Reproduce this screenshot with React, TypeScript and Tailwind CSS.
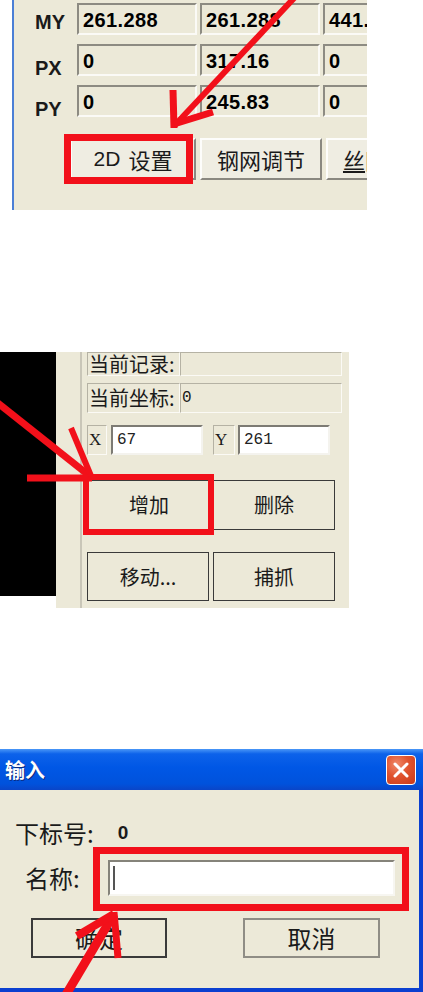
import { FC, ReactNode } from "react";

const cjk = "font-['Noto_Sans_CJK_SC','Liberation_Sans',sans-serif]";

// sunken field used in the first panel (read-only values)
const Field: FC<{ value: string; w: string }> = ({ value, w }) => (
  <div
    className={`${w} h-[32px] shrink-0 border-2 border-t-[#8d8b82] border-l-[#8d8b82] border-b-[#fbfaf6] border-r-[#fbfaf6] bg-[#ECE9D8] pl-[4px] pt-[3px] text-[20px] font-bold leading-[24px] tracking-[0.4px] text-black font-['Liberation_Sans',sans-serif] whitespace-nowrap`}
  >
    {value}
  </div>
);

const RaisedButton: FC<{ children: ReactNode; w: string }> = ({ children, w }) => (
  <div
    className={`${w} h-[42px] shrink-0 flex items-center justify-center border-2 border-t-[#fdfdfb] border-l-[#fdfdfb] border-b-[#8a8880] border-r-[#8a8880] bg-[#EFEDE2] text-[22px] text-[#1a1a1a] whitespace-nowrap ${cjk}`}
  >
    {children}
  </div>
);

const DarkButton: FC<{ children: ReactNode; w: string; h: string }> = ({ children, w, h }) => (
  <div
    className={`${w} ${h} shrink-0 flex items-center justify-center border-[1.5px] border-[#3a3a3a] bg-[#ECE9D8] text-[20px] text-[#1a1a1a] ${cjk}`}
  >
    {children}
  </div>
);

const Etched: FC<{ children?: ReactNode; w: string; h: string }> = ({ children, w, h }) => (
  <div
    className={`${w} ${h} shrink-0 flex items-center border border-t-[#b5b2a4] border-l-[#b5b2a4] border-b-[#fbfaf5] border-r-[#fbfaf5] bg-[#ECE9D8] pl-[1px] text-[20px] text-[#1a1a1a] whitespace-nowrap ${cjk}`}
  >
    {children}
  </div>
);

const WhiteInput: FC<{ value: string }> = ({ value }) => (
  <div className="w-[92px] h-[30px] shrink-0 border-2 border-t-[#7d7b74] border-l-[#7d7b74] border-b-[#f4f3ee] border-r-[#f4f3ee] bg-white pl-[4px] text-[16px] leading-[26px] text-[#222] font-['Liberation_Mono',monospace]">
    {value}
  </div>
);

export default function App() {
  return (
    <div className="relative w-[423px] h-[992px] overflow-hidden bg-white">
      {/* panel 1: coordinate table */}
      <div className="ml-[12px] w-[355px] h-[210px] overflow-hidden border-l-2 border-[#4b7fd6] bg-[#ECE9D8]">
        <div className="flex flex-col gap-[9px] pt-[3px]">
          {[
            ["MY", "261.288", "261.288", "441.5"],
            ["PX", "0", "317.16", "0"],
            ["PY", "0", "245.83", "0"],
          ].map(([label, a, b, c]) => (
            <div key={label} className="flex h-[32px]">
              <div
                className={`w-[63px] h-[32px] shrink-0 pl-[21px] text-[20px] leading-[20px] font-bold text-[#1a1a1a] font-['Liberation_Sans',sans-serif] ${label === "MY" ? "pt-[9px]" : "pt-[14px]"}`}
              >
                {label}
              </div>
              <div className="flex gap-[3px]">
                <Field value={a} w="w-[120px]" />
                <Field value={b} w="w-[120px]" />
                <Field value={c} w="w-[80px]" />
              </div>
            </div>
          ))}
        </div>
        <div className="mt-[21px] flex gap-[4px] pl-[56px]">
          <RaisedButton w="w-[126px]">
            <span className="font-['Liberation_Sans',sans-serif] text-[21px]">2D</span>
            <span className="ml-[8px]">设置</span>
          </RaisedButton>
          <RaisedButton w="w-[122px]">钢网调节</RaisedButton>
          <RaisedButton w="w-[122px]">
            <span className="underline">丝</span>网调节
          </RaisedButton>
        </div>
      </div>

      {/* panel 2: record editor */}
      <div className="mt-[142px] flex w-[349px] h-[256px]">
        <div className="w-[56px] h-[244px] shrink-0 bg-black" />
        <div className="w-[24px] h-full shrink-0 bg-[#ECE9D8]" />
        <div className="h-full flex-1 border-l-2 border-l-[#c9c6b8] bg-[#ECE9D8] pl-[5px]">
          <div className="flex">
            <Etched w="w-[93px]" h="h-[24px]">
              当前记录:
            </Etched>
            <Etched w="w-[162px]" h="h-[24px]" />
          </div>
          <div className="mt-[7px] flex">
            <Etched w="w-[93px]" h="h-[30px]">
              当前坐标:
            </Etched>
            <Etched w="w-[162px]" h="h-[30px]">
              <span className="text-[16px] font-['Liberation_Mono',monospace]">0</span>
            </Etched>
          </div>
          <div className="mt-[12px] flex items-center">
            <Etched w="w-[20px]" h="h-[30px]">
              <span className="text-[17px] font-['Liberation_Serif',serif]">X</span>
            </Etched>
            <div className="ml-[4px]">
              <WhiteInput value="67" />
            </div>
            <div className="ml-[10px]">
              <Etched w="w-[22px]" h="h-[30px]">
                <span className="text-[17px] font-['Liberation_Serif',serif]">Y</span>
              </Etched>
            </div>
            <div className="ml-[3px]">
              <WhiteInput value="261" />
            </div>
          </div>
          <div className="mt-[25px] flex gap-[2px]">
            <DarkButton w="w-[124px]" h="h-[50px]">增加</DarkButton>
            <DarkButton w="w-[122px]" h="h-[50px]">删除</DarkButton>
          </div>
          <div className="mt-[22px] flex gap-[4px]">
            <DarkButton w="w-[122px]" h="h-[49px]">移动...</DarkButton>
            <DarkButton w="w-[122px]" h="h-[49px]">捕抓</DarkButton>
          </div>
        </div>
      </div>

      {/* panel 3: input dialog */}
      <div className="mt-[141px] flex h-[243px] w-[423px] flex-col">
        <div className="flex h-[41px] shrink-0 items-center justify-between bg-[linear-gradient(to_bottom,#4a97f7_0%,#0d62ea_12%,#0057e5_45%,#0052dc_85%,#0a45c8_100%)] pl-[5px] pr-[7px]">
          <span className={`text-[20px] font-bold text-white [text-shadow:1px_1px_0_#0a2a80] ${cjk}`}>输入</span>
          <div className="flex h-[30px] w-[30px] items-center justify-center rounded-[4px] border border-white bg-[radial-gradient(circle_at_35%_30%,#f08a6a_0%,#e0532e_45%,#c93a1a_100%)]">
            <svg width="18" height="18" viewBox="0 0 18 18">
              <path d="M3 3 L15 15 M15 3 L3 15" stroke="white" strokeWidth="3" strokeLinecap="round" />
            </svg>
          </div>
        </div>
        <div className="flex-1 border-r-4 border-b-4 border-[#0b3fd0] bg-[#ECE9D8]">
          <div className={`mt-[26px] flex h-[34px] items-center pl-[15px] text-[24px] text-[#1a1a1a] ${cjk}`}>
            <span>下标号:</span>
            <span className="ml-[24px] text-[19px] font-bold font-['Liberation_Sans',sans-serif]">0</span>
          </div>
          <div className="mt-[10px] flex items-center">
            <span className={`w-[108px] shrink-0 pl-[25px] text-[24px] text-[#1a1a1a] ${cjk}`}>名称:</span>
            <div className="flex h-[36px] w-[287px] items-center border-2 border-t-[#85837a] border-l-[#85837a] border-b-[#f7f6f1] border-r-[#f7f6f1] bg-white pl-[3px]">
              <div className="h-[24px] w-[2px] bg-[#555]" />
            </div>
          </div>
          <div className="mt-[22px] flex">
            <div className={`ml-[31px] flex h-[40px] w-[136px] items-center justify-center border-2 border-[#3a3a3a] bg-[#ECE9D8] text-[24px] text-[#1a1a1a] ${cjk}`}>
              确定
            </div>
            <div className={`ml-[76px] flex h-[40px] w-[137px] items-center justify-center border-2 border-[#8f8d85] bg-[#ECE9D8] text-[24px] text-[#1a1a1a] ${cjk}`}>
              取消
            </div>
          </div>
        </div>
      </div>

      {/* red annotation marks drawn over the screenshots */}
      <svg className="pointer-events-none absolute left-0 top-0" width="423" height="992" viewBox="0 0 423 992">
        <g stroke="#f2101a" fill="none">
          <rect x="67.5" y="137.5" width="122" height="43" strokeWidth="7" />
          <line x1="296" y1="-4" x2="175" y2="125" strokeWidth="6" />
          <line x1="173" y1="90" x2="174" y2="128" strokeWidth="7" />
          <line x1="213" y1="112" x2="174" y2="124" strokeWidth="7" />

          <rect x="86" y="477" width="125" height="55" strokeWidth="6" />
          <line x1="-6" y1="400" x2="91" y2="477" strokeWidth="7" />
          <line x1="27" y1="478" x2="92" y2="478" strokeWidth="7" />
          <line x1="71" y1="428" x2="91" y2="476" strokeWidth="6" />

          <rect x="96.5" y="850.5" width="309" height="57" strokeWidth="7" />
          <line x1="64" y1="998" x2="114" y2="914" strokeWidth="9" />
          <line x1="114" y1="912" x2="118" y2="958" strokeWidth="7" />
          <line x1="77" y1="936" x2="114" y2="914" strokeWidth="8" />
        </g>
      </svg>
    </div>
  );
}
